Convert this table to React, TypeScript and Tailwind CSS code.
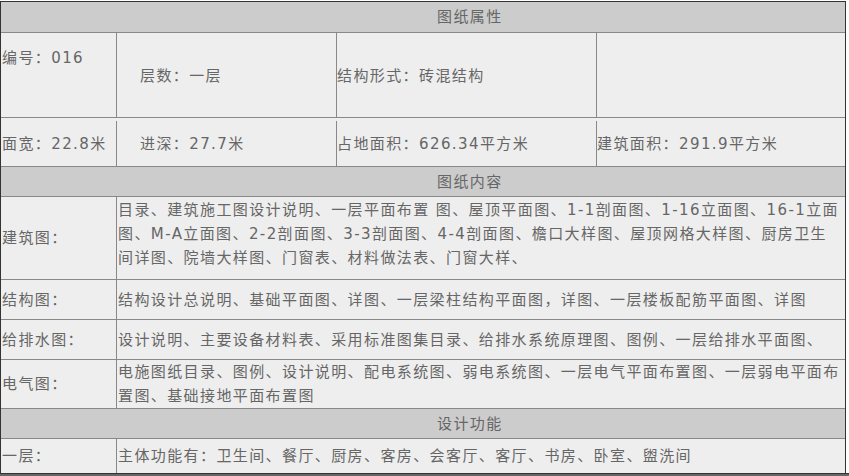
const font = "font-['DejaVu_Sans','Noto_Sans_CJK_SC',sans-serif] text-[15px] tracking-[1.4px] leading-6 text-[#666]";

function SectionHeader({ title, h }: { title: string; h: string }) {
  return (
    <div className={`flex items-center border-t border-[#888] bg-[#ccc] pl-[436px] ${h}`}>
      {title}
    </div>
  );
}

function ContentRow({ label, lines, h }: { label: string; lines: string[]; h: string }) {
  return (
    <div className={`flex border-t border-[#888] ${h}`}>
      <div className="flex w-[116px] shrink-0 items-center border-r border-[#888] pl-px">{label}</div>
      <div className="flex flex-col justify-center pl-px">
        {lines.map((l, i) => (
          <div key={i} className="whitespace-nowrap">
            {l}
          </div>
        ))}
      </div>
    </div>
  );
}

export default function App() {
  return (
    <div className={`bg-white pt-px ${font}`}>
      <div className="w-[846px] border-x border-t border-[#333] bg-[#eee]">
        <div className="flex h-[30px] items-center bg-[#ccc] pl-[436px]">图纸属性</div>

        <div className="flex h-[85px] border-t border-[#888]">
          <div className="w-[116px] shrink-0 border-r border-[#888] pt-[13px] pl-px">编号：016</div>
          <div className="flex w-[220px] shrink-0 items-center border-r border-[#888] pt-[2px] pl-[23px]">层数：一层</div>
          <div className="flex w-[260px] shrink-0 items-center border-r border-[#888] pt-[2px]">结构形式：砖混结构</div>
          <div className="flex-1" />
        </div>

        <div className="flex h-[49px] border-t border-[#888] pt-[3px]">
          <div className="flex w-[116px] shrink-0 items-center border-r border-[#888] pl-px">面宽：22.8米</div>
          <div className="flex w-[220px] shrink-0 items-center border-r border-[#888] pl-[23px]">进深：27.7米</div>
          <div className="flex w-[260px] shrink-0 items-center border-r border-[#888]">占地面积：626.34平方米</div>
          <div className="flex flex-1 items-center">建筑面积：291.9平方米</div>
        </div>

        <SectionHeader title="图纸内容" h="h-[30px]" />

        <div className="flex h-[83px] border-t border-[#888]">
          <div className="flex w-[116px] shrink-0 items-center border-r border-[#888] pl-px">建筑图：</div>
          <div className="pt-px pl-px">
            <div className="whitespace-nowrap">目录、建筑施工图设计说明、一层平面布置 图、屋顶平面图、1-1剖面图、1-16立面图、16-1立面</div>
            <div className="whitespace-nowrap">图、M-A立面图、2-2剖面图、3-3剖面图、4-4剖面图、檐口大样图、屋顶网格大样图、厨房卫生</div>
            <div className="whitespace-nowrap">间详图、院墙大样图、门窗表、材料做法表、门窗大样、</div>
          </div>
        </div>

        <ContentRow
          label="结构图："
          h="h-[40px]"
          lines={["结构设计总说明、基础平面图、详图、一层梁柱结构平面图，详图、一层楼板配筋平面图、详图"]}
        />
        <ContentRow
          label="给排水图："
          h="h-[40px]"
          lines={["设计说明、主要设备材料表、采用标准图集目录、给排水系统原理图、图例、一层给排水平面图、"]}
        />
        <ContentRow
          label="电气图："
          h="h-[49px]"
          lines={["电施图纸目录、图例、设计说明、配电系统图、弱电系统图、一层电气平面布置图、一层弱电平面布", "置图、基础接地平面布置图"]}
        />

        <SectionHeader title="设计功能" h="h-[30px]" />

        <ContentRow
          label="一层："
          h="h-[35px]"
          lines={["主体功能有：卫生间、餐厅、厨房、客房、会客厅、客厅、书房、卧室、盥洗间"]}
        />
      </div>
      <div className="h-[3px] w-[849px] border-t border-[#333] bg-[#666]" />
    </div>
  );
}
